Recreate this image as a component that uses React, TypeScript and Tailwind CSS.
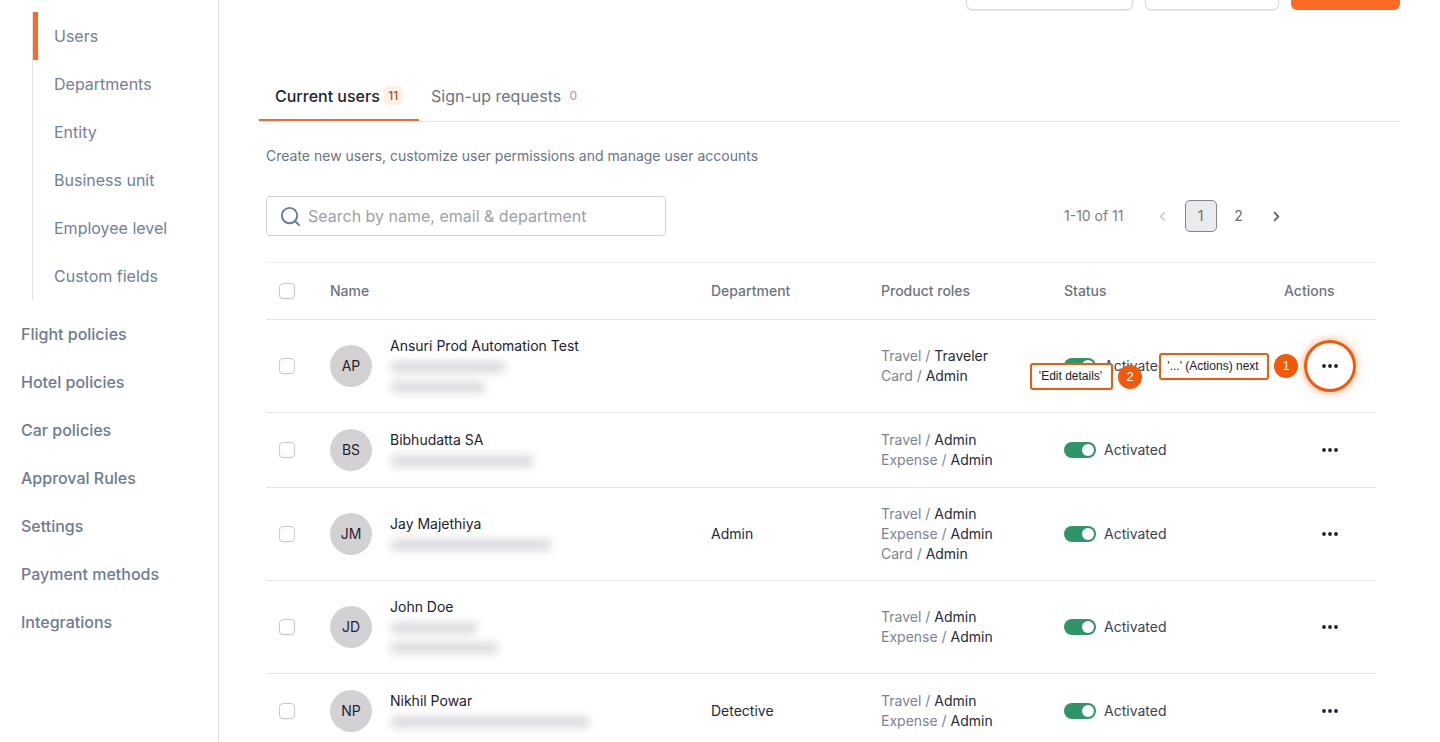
import { Search, ChevronLeft, ChevronRight } from "lucide-react";

const subNav = ["Users", "Departments", "Entity", "Business unit", "Employee level", "Custom fields"];
const mainNav = ["Flight policies", "Hotel policies", "Car policies", "Approval Rules", "Settings", "Payment methods", "Integrations"];

type Role = [string, string];
type User = {
  initials: string;
  name: string;
  dept: string;
  roles: Role[];
  blur: number[];
  height: string;
};

const users: User[] = [
  { initials: "AP", name: "Ansuri Prod Automation Test", dept: "", roles: [["Travel", "Traveler"], ["Card", "Admin"]], blur: [116, 96], height: "h-[93px]" },
  { initials: "BS", name: "Bibhudatta SA", dept: "", roles: [["Travel", "Admin"], ["Expense", "Admin"]], blur: [144], height: "h-[75px]" },
  { initials: "JM", name: "Jay Majethiya", dept: "Admin", roles: [["Travel", "Admin"], ["Expense", "Admin"], ["Card", "Admin"]], blur: [162], height: "h-[93px]" },
  { initials: "JD", name: "John Doe", dept: "", roles: [["Travel", "Admin"], ["Expense", "Admin"]], blur: [88, 108], height: "h-[93px]" },
  { initials: "NP", name: "Nikhil Powar", dept: "Detective", roles: [["Travel", "Admin"], ["Expense", "Admin"]], blur: [200], height: "h-[75px]" },
];

const Dots = () => (
  <svg width="16" height="4" viewBox="0 0 16 4" className="fill-[#1f2430]">
    <circle cx="2" cy="2" r="1.9" />
    <circle cx="8" cy="2" r="1.9" />
    <circle cx="14" cy="2" r="1.9" />
  </svg>
);

const Toggle = () => (
  <span className="flex h-4 w-8 items-center justify-end rounded-full bg-[#2f9468] pr-[2px]">
    <span className="h-3 w-3 rounded-full bg-white" />
  </span>
);

const Checkbox = () => <span className="block h-4 w-4 rounded-[4px] border border-[#c9c9d1] bg-white shadow-[0_1px_1px_rgba(0,0,0,0.05)]" />;

const Row = ({ user, first }: { user: User; first: boolean }) => (
  <div className={`relative grid grid-cols-[64px_381px_170px_183px_220px_1fr] items-center border-b border-[#e5e5e8] ${user.height}`}>
    <div className="pl-[13px]"><Checkbox /></div>
    <div className="flex items-center">
      <span className="flex h-[42px] w-[42px] items-center justify-center rounded-full bg-[#d3d1d4] text-[14px] leading-5 text-[#1f2430]">{user.initials}</span>
      <div className="-mt-[3px] ml-[18px] flex flex-col">
        <span className="text-[14px] leading-5 text-[#1c2230]">{user.name}</span>
        {user.blur.map((w, i) => (
          <span key={i} className={`h-3 rounded-full bg-[#dcdce0] blur-[4px] ${i === 0 ? "mt-[5px]" : "mt-2"}`} style={{ width: w }} />
        ))}
      </div>
    </div>
    <div className="text-[14px] leading-5 text-[#252b38]">{user.dept}</div>
    <div className="flex flex-col text-[14px] leading-5">
      {user.roles.map(([product, role]) => (
        <span key={product} className="text-[#7b8494]">
          {product} / <span className="text-[#252b38]">{role}</span>
        </span>
      ))}
    </div>
    <div className="flex items-center gap-2 text-[14px] leading-5 text-[#3a4254]">
      <Toggle />
      Activated
    </div>
    <div className="pl-[38px]"><Dots /></div>
    {first && (
      <>
        <div className="absolute left-[893px] top-[33px] flex h-[27px] w-[110px] items-center justify-center rounded-[3px] border-2 border-[#f15a0a] bg-white pb-[1px] pr-[2px] font-['Liberation_Sans',sans-serif] text-[12px] leading-4 text-[#222]">'...' (Actions) next</div>
        <span className="absolute left-[1008px] top-[34px] flex h-6 w-6 items-center justify-center rounded-full bg-[#f15a0a] font-['Liberation_Sans',sans-serif] text-[13px] leading-4 text-white">1</span>
        <div className="absolute left-[764px] top-[43px] flex h-[27px] w-[83px] items-center justify-center rounded-[3px] border-2 border-[#f15a0a] bg-white pb-[1px] pr-[2px] font-['Liberation_Sans',sans-serif] text-[12px] leading-4 text-[#222]">'Edit details'</div>
        <span className="absolute left-[852px] top-[45px] flex h-6 w-6 items-center justify-center rounded-full bg-[#f15a0a] font-['Liberation_Sans',sans-serif] text-[13px] leading-4 text-white">2</span>
        <span className="absolute left-[1038px] top-[20px] h-[52px] w-[52px] rounded-full border-[3px] border-[#f15a0a] shadow-[0_0_8px_rgba(241,90,10,0.55)]" />
      </>
    )}
  </div>
);

export default function App() {
  return (
    <div className="flex h-[742px] overflow-hidden bg-white font-['Inter',sans-serif]">
      <aside className="w-[219px] shrink-0 border-r border-[#dcdcdf] pt-3">
        <div className="ml-8 border-l border-[#e2e2e5]">
          {subNav.map((item, i) => (
            <div key={item} className="relative flex h-12 items-center pl-[21px] text-[16px] text-[#72809c]">
              {i === 0 && <span className="absolute left-0 top-0 h-12 w-[5px] bg-[#fc6a26]" />}
              {item}
            </div>
          ))}
        </div>
        <div className="mt-[10px] flex flex-col">
          {mainNav.map((item) => (
            <div key={item} className="flex h-12 items-center pl-[21px] text-[16px] font-medium text-[#6e7b91]">{item}</div>
          ))}
        </div>
      </aside>

      <main className="flex-1 pl-10 pr-10">
        <div className="-mt-[30px] flex justify-end gap-3">
          <div className="h-10 w-[167px] rounded-md border border-[#d5d5dc] bg-white shadow-[0_1px_1px_rgba(0,0,0,0.08)]" />
          <div className="h-10 w-[134px] rounded-md border border-[#d5d5dc] bg-white shadow-[0_1px_1px_rgba(0,0,0,0.08)]" />
          <div className="h-10 w-[109px] rounded-md bg-[#fc6a26]" />
        </div>

        <div className="mt-[62px] flex h-[50px] border-b border-[#e5e5e8]">
          <div className="flex w-[160px] items-center border-b-2 border-[#f56a2c] pl-4">
            <span className="text-[16px] font-medium leading-6 text-[#1f2430]">Current users</span>
            <span className="ml-1 flex h-[19px] w-[19px] items-center justify-center rounded-[5px] bg-[#fdf0e6] text-[12px] font-medium text-[#a4542a]">11</span>
          </div>
          <div className="flex items-center pb-[1px] pl-3">
            <span className="text-[16px] leading-6 text-[#6e7480]">Sign-up requests</span>
            <span className="ml-[2px] flex h-[19px] w-5 items-center justify-center rounded-[5px] bg-[#fcfcfd] text-[12px] text-[#9a9ea8]">0</span>
          </div>
        </div>

        <p className="ml-[7px] mt-6 text-[14px] leading-5 text-[#6a7486]">Create new users, customize user permissions and manage user accounts</p>

        <div className="ml-[7px] mt-[30px] flex w-[1110px] items-center">
          <div className="flex h-10 w-[400px] items-center rounded-[4px] border border-[#cfd2da] bg-white pl-3">
            <Search size={23} strokeWidth={2} className="text-[#5f7d9b]" />
            <span className="ml-[6px] text-[16px] text-[#a0a0a6]">Search by name, email & department</span>
          </div>
          <span className="ml-[398px] text-[14px] leading-5 text-[#7b7b85]">1-10 of 11</span>
          <ChevronLeft size={15} strokeWidth={2.5} className="ml-[31px] text-[#c4c4ca]" />
          <span className="ml-[15px] flex h-8 w-8 items-center justify-center rounded-[5px] border border-[#85858f] bg-[#ebebef] text-[14px] leading-5 text-[#6b6b78]">1</span>
          <span className="flex h-8 w-[44px] items-center justify-center text-[14px] leading-5 text-[#6b6b78]">2</span>
          <ChevronRight size={15} strokeWidth={3} className="ml-2 text-[#6b6b78]" />
        </div>

        <div className="ml-[7px] mt-[26px] w-[1110px] border-t border-[#f0f0f2]">
          <div className="grid h-[57px] grid-cols-[64px_381px_170px_183px_220px_1fr] items-center border-b border-[#e5e5e8] text-[14px] font-medium leading-5 text-[#6e7480]">
            <div className="pl-[13px]"><Checkbox /></div>
            <div>Name</div>
            <div>Department</div>
            <div>Product roles</div>
            <div>Status</div>
            <div>Actions</div>
          </div>
          {users.map((user, i) => (
            <Row key={user.initials} user={user} first={i === 0} />
          ))}
        </div>
      </main>
    </div>
  );
}
